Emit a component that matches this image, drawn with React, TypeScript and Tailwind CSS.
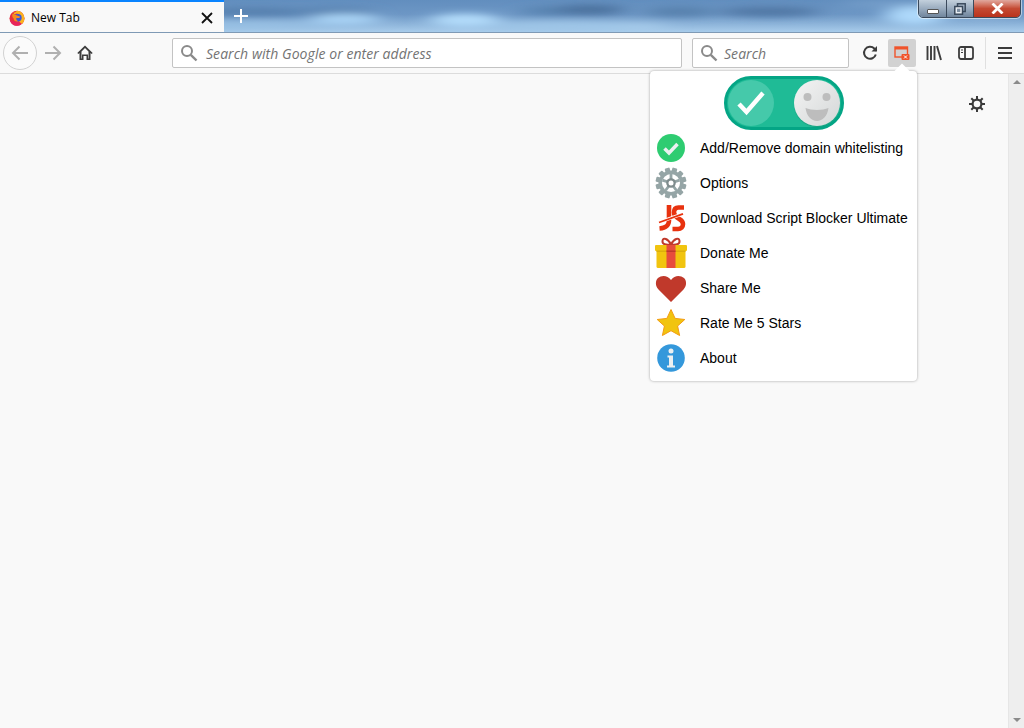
import React from "react";

const ui = { fontFamily: '"Open Sans", "Noto Sans", sans-serif' };

function Wallpaper() {
  const blobs: [number, number, number, number, string][] = [
    [40, 27, 60, 6, "#a2c9ea"], [130, 12, 50, 4, "#5580ae"], [255, 12, 55, 4, "#527dab"], [335, 12, 40, 4, "#557fad"],
    [345, 20, 35, 6, "#a9d3f5"], [465, 21, 35, 7, "#b2dbfa"], [555, 11, 35, 4, "#5480ad"], [590, 10, 35, 5, "#4a6f9b"],
    [610, 28, 60, 4, "#a8cdec"], [680, 12, 35, 5, "#5680ac"], [770, 12, 50, 5, "#4f76a3"], [915, 16, 30, 10, "#aed9fb"],
    [900, 4, 60, 3, "#7aa3cd"], [240, 26, 90, 3, "#9ac3e6"], [560, 27, 70, 4, "#a0c8e9"], [980, 12, 30, 6, "#94bbdd"],
  ];
  return (
    <svg className="absolute inset-0 w-full h-full" viewBox="0 0 1024 33" preserveAspectRatio="none">
      <defs>
        <filter id="b" x="-30%" y="-100%" width="160%" height="300%"><feGaussianBlur stdDeviation="11 4" /></filter>
        <linearGradient id="g" x1="0" y1="0" x2="0" y2="1">
          <stop offset="0" stopColor="#628ebe" />
          <stop offset=".45" stopColor="#6d97c5" />
          <stop offset="1" stopColor="#a8cceb" />
        </linearGradient>
      </defs>
      <rect width="1024" height="33" fill="url(#g)" />
      <g filter="url(#b)">
        {blobs.map(([x, y, rx, ry, f], i) => <ellipse key={i} cx={x} cy={y} rx={rx} ry={ry} fill={f} />)}
      </g>
    </svg>
  );
}

function Firefox() {
  return (
    <svg width="16" height="16" viewBox="0 0 16 16">
      <circle cx="8" cy="8.300" r="7.500" fill="#e6303f" />
      <path d="M1 10.500c.6 3 3.500 5.300 7 5.300 3 0 5.500-1.700 6.700-4.300L8 12z" fill="#e8255c" />
      <path d="M8 .8a7.500 7.500 0 0 1 7.500 7.500c0 2.200-1 4.300-2.500 5.700l-3-2.500 2-4-2.500-3.500L5.500 3z" fill="#fbb21d" />
      <circle cx="9" cy="7.800" r="3.700" fill="#3a58d8" />
      <path d="M3.800 3.500L8 5.500l3 1-.5 1.500H7.300c-.3 1.500.5 3 2.200 3.300C7 12.300 4.600 10.800 4.500 8.300 3 7 2.800 5 3.800 3.500z" fill="#f58d1e" />
      <path d="M4.500 2.300c1 .5 2 .6 3.700.4-1 .8-1.800 1.200-3 1.200z" fill="#fbd01d" />
    </svg>
  );
}

function SearchIcon() {
  return (
    <svg width="18" height="18" viewBox="0 0 18 18" fill="none" stroke="#8a8a8a" strokeWidth="2">
      <circle cx="7" cy="7" r="5" />
      <path d="M10.800 10.800l5.700 5.700" strokeWidth="2.400" />
    </svg>
  );
}

function Field({ text, className, gap }: { text: string; className: string; gap: string }) {
  return (
    <div className={`h-[30px] flex items-center bg-white border border-[#c3c3c3] rounded-[2px] ${className}`}>
      <SearchIcon />
      <span className={`${gap} text-[14px] italic text-[#737373] tracking-[0.06px] whitespace-nowrap`} style={ui}>{text}</span>
    </div>
  );
}

function Toolbar() {
  return (
    <div className="h-[41px] flex items-center bg-[#f9f9f9] border-b border-[#dcdcdc] relative">
      <div className="ml-[3px] w-[34px] h-[34px] rounded-full border border-[#d2d2d2] bg-[#fbfbfb] flex items-center justify-center">
        <svg width="18" height="16" viewBox="0 0 18 16" fill="none" stroke="#b0b0b0" strokeWidth="2"><path d="M17 8H2M8.500 1.500L2 8l6.500 6.500" /></svg>
      </div>
      <div className="ml-[7px] w-[18px] flex">
        <svg width="18" height="16" viewBox="0 0 18 16" fill="none" stroke="#b0b0b0" strokeWidth="2"><path d="M1 8h15M9.500 1.500L16 8l-6.500 6.500" /></svg>
      </div>
      <div className="ml-[15px] w-[16px] flex">
        <svg width="16" height="16" viewBox="0 0 16 16"><path fill="#3c3c3c" d="M8 .5L.3 8l1.100 1.100L2.500 8v7h4v-4h3v4h4V8l1.100 1.100L15.700 8zM8 3l3.500 3.500V13.500h-.5V9.500H5v4h-.5V6.500z" /></svg>
      </div>
      <Field text="Search with Google or enter address" gap="ml-[8px]" className="ml-[79px] w-[510px] pl-[7px]" />
      <Field text="Search" gap="ml-[6px]" className="ml-[10px] w-[157px] pl-[7px]" />
      <div className="ml-[13px] w-[16px] flex">
        <svg width="16" height="16" viewBox="0 0 16 16" fill="none" stroke="#3c3c3c" strokeWidth="2"><path d="M13.800 9.500A6 6 0 1 1 12.300 3.500L14.500 5.800" /><path d="M15 1v5.500H9.500" fill="#3c3c3c" stroke="none" /></svg>
      </div>
      <div className="ml-[10px] w-[28px] h-[28px] bg-[#d2d2d2] rounded-[2px] flex items-center justify-center">
        <svg width="16" height="16" viewBox="0 0 16 16">
          <rect x="1" y="2" width="12.500" height="10" fill="none" stroke="#f0532a" strokeWidth="1.400" />
          <rect x="1" y="2" width="12.500" height="2.500" fill="#f0532a" />
          <rect x="7.500" y="9" width="8" height="6" rx="1" fill="#f0532a" />
          <path d="M10 10.500l3 3M13 10.500l-3 3" stroke="#fff" strokeWidth="1" />
        </svg>
      </div>
      <div className="ml-[10px] w-[16px] flex">
        <svg width="16" height="16" viewBox="0 0 16 16" stroke="#3c3c3c" strokeWidth="1.900" fill="none"><path d="M1.500 1v14M5 1v14M8.500 1v14M11 1l4 14" /></svg>
      </div>
      <div className="ml-[16px] w-[16px] flex">
        <svg width="16" height="14" viewBox="0 0 16 14" fill="none" stroke="#3c3c3c" strokeWidth="1.800"><rect x="1" y="1" width="14" height="12" rx="2" /><path d="M7 1v12" /><path d="M3 4h2M3 6.500h2" strokeWidth="1.200" /></svg>
      </div>
      <div className="ml-[11px] w-px h-[32px] bg-[#e0e0e0]" />
      <div className="ml-[12px] w-[14px] flex flex-col gap-[3px]">
        <div className="h-[2px] bg-[#3c3c3c]" /><div className="h-[2px] bg-[#3c3c3c]" /><div className="h-[2px] bg-[#3c3c3c]" />
      </div>
    </div>
  );
}

function TitleBar() {
  return (
    <div className="h-[33px] relative flex overflow-hidden border-b border-[#7f9ab5]">
      <Wallpaper />
      <div className="relative w-[224px] h-[33px] bg-[#f9f9f9] border-t-2 border-[#0a84ff] flex items-center pl-[9px]">
        <Firefox />
        <span className="ml-[6px] text-[12px] text-black" style={ui}>New Tab</span>
        <svg className="ml-auto mr-[11px]" width="12" height="12" viewBox="0 0 12 12" stroke="#111" strokeWidth="1.800"><path d="M1 1l10 10M11 1L1 11" /></svg>
      </div>
      <svg className="relative ml-[10px] mt-[9px]" width="14" height="14" viewBox="0 0 14 14" stroke="#fff" strokeWidth="2"><path d="M7 0v14M0 7h14" /></svg>
      <div className="absolute left-[918px] top-[-1px] w-[103px] h-[19px] flex rounded-b-[5px] border border-[#3b4a5c] overflow-hidden shadow-[0_0_0_1px_rgba(255,255,255,.5)]">
        <div className="w-[28px] flex items-center justify-center bg-gradient-to-b from-[#c3d0dc] via-[#9aacbf] to-[#71869d] border-r border-[#3b4a5c]">
          <div className="w-[12px] h-[5px] mt-[6px] bg-white border border-[#555] rounded-[1px]" />
        </div>
        <div className="w-[27px] flex items-center justify-center bg-gradient-to-b from-[#c3d0dc] via-[#9aacbf] to-[#71869d] border-r border-[#3b4a5c]">
          <svg width="12" height="12" viewBox="0 0 12 12" fill="none"><rect x="3.500" y=".8" width="7.700" height="7.700" stroke="#39495b" strokeWidth="1.500" /><rect x=".8" y="3.500" width="7.700" height="7.700" fill="#e8edf2" stroke="#39495b" strokeWidth="1.500" /><rect x="3" y="5.700" width="3.300" height="3.300" fill="#7d8fa2" /></svg>
        </div>
        <div className="flex-1 flex items-center justify-center bg-gradient-to-b from-[#e0a89e] via-[#c44a33] to-[#b9321c]">
          <svg width="13" height="11" viewBox="0 0 13 11" stroke="#fff" strokeWidth="2.800"><path d="M1.500 .5l10 10M11.500 .5l-10 10" /></svg>
        </div>
      </div>
    </div>
  );
}

function Toggle() {
  return (
    <div className="w-[120px] h-[54px] rounded-full bg-[#1fbb96] border-[3px] border-[#04a585] flex items-center justify-between px-[1px]">
      <div className="w-[46px] h-[46px] rounded-full bg-[#45c9aa] flex items-center justify-center">
        <svg width="30" height="26" viewBox="0 0 30 26" fill="none" stroke="#fff" strokeWidth="4.500"><path d="M3 14l7.500 8L27 3" /></svg>
      </div>
      <div className="w-[46px] h-[46px] rounded-full bg-gradient-to-br from-[#f4f4f4] to-[#d4d7d7] shadow-[0_1px_1px_rgba(0,0,0,.15)]">
        <svg width="46" height="46" viewBox="0 0 46 46">
          <circle cx="13.500" cy="17" r="4" fill="#bdbdbd" />
          <circle cx="32.500" cy="17" r="4" fill="#bdbdbd" />
          <path d="M11.500 28c6 2.500 17 2.500 23 0-1 8-6 13-11.500 13s-10.500-5-11.500-13z" fill="#bdbdbd" />
        </svg>
      </div>
    </div>
  );
}

const icons: Record<string, React.ReactNode> = {
  check: (
    <svg width="32" height="32" viewBox="0 0 32 32">
      <circle cx="16" cy="16" r="14" fill="#2ecc71" />
      <path d="M9.500 16.500l4.500 4.500 8.500-9" fill="none" stroke="#ecf0f1" strokeWidth="3.500" />
    </svg>
  ),
  gear: (
    <svg width="32" height="32" viewBox="0 0 32 32">
      <g fill="#95a5a6">
        {[0, 30, 60, 90, 120, 150].map((a) => (
          <rect key={a} x="13.500" y="0.500" width="5" height="31" rx="1" transform={`rotate(${a + 15} 16 16)`} />
        ))}
      </g>
      <circle cx="16" cy="16" r="12.500" fill="#95a5a6" />
      <circle cx="16" cy="16" r="9" fill="#fff" />
      <g stroke="#95a5a6" strokeWidth="2.800">
        <path d="M16 16V7M16 16l8.600-2.800M16 16l5.300 7.300M16 16l-5.300 7.300M16 16L7.400 13.200" />
      </g>
      <circle cx="16" cy="16" r="4.800" fill="#7f8c8d" />
      <circle cx="16" cy="16" r="2.500" fill="#fff" />
    </svg>
  ),
  js: (
    <svg width="32" height="32" viewBox="0 0 32 32">
      <g fill="none" stroke="#e8320f" strokeWidth="4.600">
        <path d="M14 3v15c0 6-3.500 8-9.500 8.500" />
        <path d="M29 5.500h-5.500c-3 0-4.500 2-4.500 5s2 4.500 4.500 6 4.500 2.500 4.500 5.500-2 5-5 5h-5.500" />
      </g>
      <path d="M2 21L30 11" stroke="#fff" strokeWidth="3.200" />
      <path d="M4 20.500L28 11.800" stroke="#e8320f" strokeWidth="1.800" />
    </svg>
  ),
  gift: (
    <svg width="32" height="32" viewBox="0 0 32 32">
      <path d="M16 7.500C13 1.500 8 0 7.500 3.800S11 8 16 7.500c5 .5 9 0 8.500-3.700S19 1.500 16 7.500z" fill="none" stroke="#c0392b" strokeWidth="2" />
      <rect x="1.500" y="12" width="29" height="19" rx="1.500" fill="#f1c40f" />
      <rect x="0" y="8" width="32" height="6" rx="1" fill="#f1c40f" />
      <rect x="1.500" y="13.500" width="29" height="1.500" fill="#dcae0c" />
      <rect x="11.500" y="8" width="9" height="23" fill="#e74c3c" />
      <rect x="11.500" y="13.500" width="9" height="1.500" fill="#c0392b" />
    </svg>
  ),
  heart: (
    <svg width="32" height="32" viewBox="0 0 32 32">
      <path d="M16 30L3.500 17.500C0 14 .3 8.500 3 6 6.500 3 12.500 3 16 8 19.500 3 25.500 3 29 6 31.700 8.500 32 14 28.500 17.500z" fill="#c0392b" />
    </svg>
  ),
  star: (
    <svg width="32" height="32" viewBox="0 0 32 32">
      <path d="M16 2.500l4.100 8.900 9.700 1.100-7.200 6.500 2 9.500L16 23.700 7.400 28.500l2-9.500-7.200-6.500 9.700-1.100z" fill="#f1c40f" stroke="#f39c12" strokeWidth="1" />
    </svg>
  ),
  info: (
    <svg width="32" height="32" viewBox="0 0 32 32">
      <circle cx="16" cy="16" r="13.800" fill="#3498db" />
      <circle cx="16" cy="9" r="2.500" fill="#ecf0f1" />
      <path d="M12.500 13.500h5.500v10h2v2h-8v-2h2v-8h-1.500z" fill="#ecf0f1" />
    </svg>
  ),
};

const items: [string, string][] = [
  ["check", "Add/Remove domain whitelisting"],
  ["gear", "Options"],
  ["js", "Download Script Blocker Ultimate"],
  ["gift", "Donate Me"],
  ["heart", "Share Me"],
  ["star", "Rate Me 5 Stars"],
  ["info", "About"],
];

function Popup() {
  return (
    <div className="absolute left-[650px] top-[71px] w-[267px] h-[310px] bg-white rounded-[4px] shadow-[0_0_3px_rgba(0,0,0,.35)]" style={{ fontFamily: '"Liberation Sans", Arial, sans-serif' }}>
      <div className="absolute left-[246px] top-[-5px] w-[12px] h-[12px] bg-white rotate-45" />
      <div className="relative flex justify-center pt-[5px]"><Toggle /></div>
      <div className="relative flex flex-col">
        {items.map(([k, t]) => (
          <div key={k} className="h-[35px] flex items-center">
            <div className="ml-[5px] w-[32px] h-[32px] flex">{icons[k]}</div>
            <span className="ml-[13px] text-[14px] leading-none text-black whitespace-nowrap">{t}</span>
          </div>
        ))}
      </div>
    </div>
  );
}

function Scrollbar() {
  return (
    <div className="w-[16px] bg-[#eeeeee] border-l border-[#e6e6e6] flex flex-col items-center justify-between py-[6px]">
      <div className="w-0 h-0 border-x-[4px] border-x-transparent border-b-[4px] border-b-[#8a8a8a]" />
      <div className="w-0 h-0 border-x-[4px] border-x-transparent border-t-[4px] border-t-[#8a8a8a]" />
    </div>
  );
}

export default function App() {
  return (
    <div className="w-[1024px] h-[728px] relative overflow-hidden flex flex-col bg-[#f9f9f9]">
      <TitleBar />
      <Toolbar />
      <div className="flex-1 flex">
        <div className="flex-1 flex justify-end pt-[22px] pr-[23px]">
          <svg width="16" height="16" viewBox="0 0 16 16">
            <g stroke="#3a3a3a" strokeWidth="2">
              <path d="M8 0v16M0 8h16M2.300 2.300l11.400 11.400M13.700 2.300L2.300 13.700" />
            </g>
            <circle cx="8" cy="8" r="5.500" fill="#3a3a3a" />
            <circle cx="8" cy="8" r="3.300" fill="#f9f9f9" />
          </svg>
        </div>
        <Scrollbar />
      </div>
      <Popup />
    </div>
  );
}
